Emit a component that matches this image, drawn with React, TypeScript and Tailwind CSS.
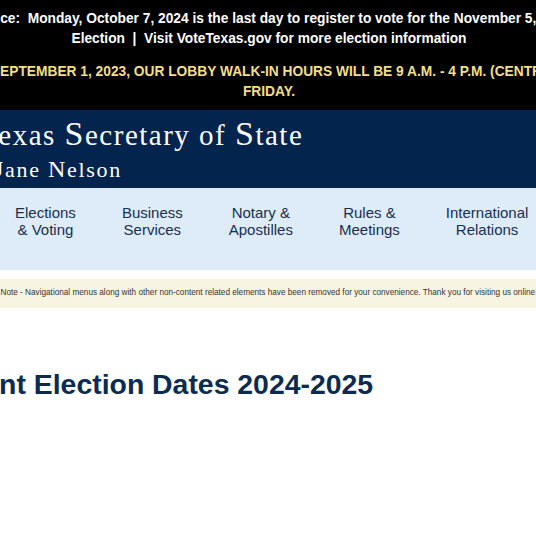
const sans = "font-['Liberation_Sans',Arial,Helvetica,sans-serif]";
const serif = "font-['Liberation_Serif','Times_New_Roman',serif]";

const navItems = [
  ['Elections', '& Voting'],
  ['Business', 'Services'],
  ['Notary &', 'Apostilles'],
  ['Rules &', 'Meetings'],
  ['International', 'Relations'],
  ['Other', 'Services'],
];

// Big initial caps like the SOS wordmark
function Cap({ children }: { children: string }) {
  return <span className="text-[34px]">{children}</span>;
}

export default function App() {
  return (
    <div className={`w-full min-h-[536px] overflow-hidden bg-white ${sans}`}>
      {/* page is wider than the window; centre sits at x=270 */}
      <div className="w-[1000px] ml-[-231px]">
        {/* alert banner */}
        <div className="bg-black pt-[9px] pb-[8px] text-center text-[13.75px] font-bold leading-[20px] whitespace-nowrap">
          <p className="text-white">
            <span className="block pr-[6px]">
              Important Notice:&nbsp; Monday, October 7, 2024 is the last day to register to vote for the November 5, 2024 General
            </span>
            <span className="block">Election &nbsp;|&nbsp; Visit VoteTexas.gov for more election information</span>
          </p>
          <p className="mt-[13px] text-[#f3df87]">
            <span className="block pl-[10px]">
              PLEASE NOTE: EFFECTIVE SEPTEMBER 1, 2023, OUR LOBBY WALK-IN HOURS WILL BE 9 A.M. - 4 P.M. (CENTRAL TIME), MONDAY THROUGH
            </span>
            <span className="block">FRIDAY.</span>
          </p>
        </div>

        {/* wordmark */}
        <div className={`h-[78px] bg-[#03244d] text-white ${serif}`}>
          <div className="pl-[207px] pt-[7px] text-[29px] leading-[34px] tracking-[1.5px] whitespace-nowrap">
            <Cap>T</Cap>exas <Cap>S</Cap>ecretary of <Cap>S</Cap>tate
          </div>
          <div className="mt-[4px] pl-[225px] text-[22px] leading-[26px] tracking-[1.7px] whitespace-nowrap">
            <span className="text-[24px]">J</span>ane <span className="text-[24px]">N</span>elson
          </div>
        </div>

        {/* main navigation */}
        <nav className="flex h-[82px] gap-[46px] bg-[#deebf9] pl-[246px] pt-[16px] text-[15px] leading-[17px] text-[#18304f]">
          {navItems.map(([a, b]) => (
            <a key={a} href="#" className="text-center whitespace-nowrap">
              {a}
              <br />
              {b}
            </a>
          ))}
        </nav>

        {/* printer-friendly note */}
        <div className="mt-[9px] flex h-[29px] items-center justify-center bg-[#f7f5e2] text-[8.2px] text-[#333] whitespace-nowrap">
          Note - Navigational menus along with other non-content related elements have been removed for your convenience. Thank you for visiting us online!
        </div>

        <h1 className="mt-[60px] pl-[126px] text-[28.4px] font-bold leading-[32px] text-[#0c2b50]">
          Important Election Dates 2024-2025
        </h1>
      </div>
    </div>
  );
}
